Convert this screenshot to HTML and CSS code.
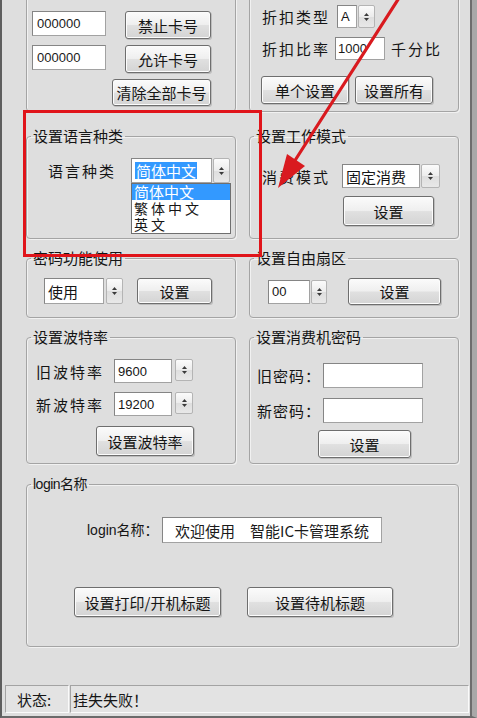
FILE: index.html
```html
<!DOCTYPE html>
<html lang="zh-CN">
<head>
    <meta charset="UTF-8">
    <meta name="viewport" content="width=device-width, initial-scale=1.0">
    <title>智能IC卡管理系统 - 设置</title>
    <link rel="stylesheet" href="styles.css">
</head>
<body>
    <div class="window">
        <div class="groups">
            <!-- card number group (top cut off) -->
            <fieldset class="group row1 card">
                <div class="body">
                    <div class="card-row">
                        <input class="txt card-no" value="000000">
                        <button class="btn btn-card">禁止卡号</button>
                    </div>
                    <div class="card-row">
                        <input class="txt card-no" value="000000">
                        <button class="btn btn-card">允许卡号</button>
                    </div>
                    <div class="card-row end">
                        <button class="btn btn-clear">清除全部卡号</button>
                    </div>
                </div>
            </fieldset>

            <fieldset class="group row1 discount">
                <div class="body">
                    <div class="line">
                        <span class="lbl w75">折扣类型</span>
                        <div class="sel">
                            <span class="sel-box w20 num">A</span>
                            <span class="spin w17">
                                <svg width="5" height="8" viewBox="0 0 5 8"><polygon points="0,3 2.5,0 5,3"/><polygon points="0,5 2.5,8 5,5"/></svg>
                            </span>
                        </div>
                    </div>
                    <div class="line mt9">
                        <span class="lbl w73">折扣比率</span>
                        <input class="txt rate" value="1000">
                        <span class="lbl unit">千分比</span>
                    </div>
                    <div class="line mt16 buttons">
                        <button class="btn btn-one">单个设置</button>
                        <button class="btn btn-all">设置所有</button>
                    </div>
                </div>
            </fieldset>

            <fieldset class="group row2 lang">
                <legend>设置语言种类</legend>
                <div class="body">
                    <div class="line">
                        <span class="lbl w83">语言种类</span>
                        <div class="sel">
                            <span class="sel-box w81 h25"><span class="hl">简体中文</span></span>
                            <span class="spin w17 h25">
                                <svg width="5" height="8" viewBox="0 0 5 8"><polygon points="0,3 2.5,0 5,3"/><polygon points="0,5 2.5,8 5,5"/></svg>
                            </span>
                            <ul class="drop">
                                <li class="on">简体中文</li>
                                <li>繁体中文</li>
                                <li>英文</li>
                            </ul>
                        </div>
                    </div>
                </div>
            </fieldset>

            <fieldset class="group row2 mode">
                <legend>设置工作模式</legend>
                <div class="body">
                    <div class="line">
                        <span class="lbl w80">消费模式</span>
                        <div class="sel">
                            <span class="sel-box w78">固定消费</span>
                            <span class="spin w19">
                                <svg width="5" height="8" viewBox="0 0 5 8"><polygon points="0,3 2.5,0 5,3"/><polygon points="0,5 2.5,8 5,5"/></svg>
                            </span>
                        </div>
                    </div>
                    <button class="btn btn-mode">设置</button>
                </div>
            </fieldset>

            <fieldset class="group row3 pwduse">
                <legend>密码功能使用</legend>
                <div class="body line">
                    <div class="sel gap2">
                        <span class="sel-box w60 h26">使用</span>
                        <span class="spin w17 h26">
                            <svg width="5" height="8" viewBox="0 0 5 8"><polygon points="0,3 2.5,0 5,3"/><polygon points="0,5 2.5,8 5,5"/></svg>
                        </span>
                    </div>
                    <button class="btn btn-pwduse">设置</button>
                </div>
            </fieldset>

            <fieldset class="group row3 sector">
                <legend>设置自由扇区</legend>
                <div class="body line">
                    <div class="sel">
                        <span class="sel-box w42 num">00</span>
                        <span class="spin w16">
                            <svg width="5" height="8" viewBox="0 0 5 8"><polygon points="0,3 2.5,0 5,3"/><polygon points="0,5 2.5,8 5,5"/></svg>
                        </span>
                    </div>
                    <button class="btn btn-sector">设置</button>
                </div>
            </fieldset>

            <fieldset class="group row4 baud">
                <legend>设置波特率</legend>
                <div class="body">
                    <div class="line">
                        <span class="lbl w78">旧波特率</span>
                        <div class="sel gap3">
                            <span class="sel-box w58 num">9600</span>
                            <span class="spin w18 h22">
                                <svg width="5" height="8" viewBox="0 0 5 8"><polygon points="0,3 2.5,0 5,3"/><polygon points="0,5 2.5,8 5,5"/></svg>
                            </span>
                        </div>
                    </div>
                    <div class="line mt9">
                        <span class="lbl w78">新波特率</span>
                        <div class="sel gap3">
                            <span class="sel-box w58 num">19200</span>
                            <span class="spin w18 h22">
                                <svg width="5" height="8" viewBox="0 0 5 8"><polygon points="0,3 2.5,0 5,3"/><polygon points="0,5 2.5,8 5,5"/></svg>
                            </span>
                        </div>
                    </div>
                    <button class="btn btn-baud">设置波特率</button>
                </div>
            </fieldset>

            <fieldset class="group row4 machpwd">
                <legend>设置消费机密码</legend>
                <div class="body">
                    <div class="line">
                        <span class="lbl w66 tight">旧密码：</span>
                        <input class="txt pwd" value="">
                    </div>
                    <div class="line mt10">
                        <span class="lbl w66 tight">新密码：</span>
                        <input class="txt pwd" value="">
                    </div>
                    <button class="btn btn-machpwd">设置</button>
                </div>
            </fieldset>

            <fieldset class="group login">
                <legend>login名称</legend>
                <div class="body">
                    <div class="line login-line">
                        <span class="lbl w75 login-lbl">login名称：</span>
                        <input class="txt title" value="欢迎使用　智能IC卡管理系统">
                    </div>
                    <div class="line login-buttons">
                        <button class="btn btn-boot">设置打印/开机标题</button>
                        <button class="btn btn-idle">设置待机标题</button>
                    </div>
                </div>
            </fieldset>
        </div>

        <div class="status">
            <span class="pane pane-label">状态:</span>
            <span class="pane pane-msg">挂失失败！</span>
        </div>

        <!-- annotation drawn over the screenshot -->
        <svg class="annot" width="477" height="718" viewBox="0 0 477 718">
            <rect x="24.5" y="111.5" width="236" height="144" fill="none" stroke="#e0141a" stroke-width="3"/>
            <line x1="399" y1="-2" x2="294" y2="162" stroke="#d91a1f" stroke-width="3.2" stroke-linecap="round"/>
            <polygon points="278,188 287,154 305,166" fill="#d91a1f"/>
        </svg>
    </div>
</body>
</html>
```

FILE: styles.css
```css
*{
   margin: 0;
   padding: 0;
   box-sizing: border-box;
   outline: none;
}

body{
   width: 477px;
   height: 718px;
   overflow: hidden;
   background-color: #dedede;
   font-family: "Noto Sans CJK SC", "Liberation Sans", sans-serif;
   font-size: 15px;
   line-height: 17px;
   color: #151515;
}

.window{
   position: relative;
   width: 477px;
   height: 718px;
   display: flex;
   flex-direction: column;
   overflow: hidden;
   border-left: 2px solid #5e5e5e;
   border-right: 5px solid #a8a8a8;
   border-bottom: 2px solid #6a6a6a;
   box-shadow: inset -2px 0 #6d6d6d;
}

.groups{
   display: grid;
   grid-template-columns: 210px 210px;
   column-gap: 13px;
   align-items: start;
   margin: -30px 0 0 24px;
}

.group{
   border: 1px solid #a4a4a4;
   border-radius: 4px;
   min-width: 0;
   box-shadow: 1px 1px 0 #f1f1f1, inset 1px 1px 0 #f1f1f1;
}

.group legend{
   margin-left: 4px;
   padding: 0 2px;
   line-height: 16px;
}

.row1{ height: 142px; }
.row2{ height: 111px; margin-top: 16px; }
.row3{ height: 68px; margin-top: 11px; }
.row4{ height: 135px; margin-top: 11px; }

.line{
   display: flex;
   align-items: center;
}

.mt9{ margin-top: 9px; }
.mt10{ margin-top: 10px; }
.mt16{ margin-top: 16px; }

.lbl{
   display: inline-block;
   flex: none;
   letter-spacing: 2px;
   white-space: nowrap;
}

.lbl.tight{ letter-spacing: 1px; }

.w66{ width: 66px; }
.w73{ width: 73px; }
.w75{ width: 75px; }
.w78{ width: 78px; }
.w80{ width: 80px; }
.w83{ width: 83px; }

/* text boxes */
.txt{
   height: 24px;
   background: #fff;
   border: 1px solid #a2a2a2;
   border-top-color: #858585;
   border-left-color: #858585;
   font-family: "Liberation Sans", sans-serif;
   font-size: 13px;
   color: #1a1a1a;
   padding: 0 4px;
}

/* select + spinner */
.sel{
   position: relative;
   display: flex;
   gap: 1px;
   flex: none;
}

.sel.gap2{ gap: 2px; }
.sel.gap3{ gap: 3px; }

.sel-box{
   display: flex;
   align-items: center;
   height: 24px;
   padding-left: 3px;
   background: #fff;
   border: 1px solid #a2a2a2;
   border-top-color: #858585;
   border-left-color: #858585;
   white-space: nowrap;
}

.sel-box.num{
   font-family: "Liberation Sans", sans-serif;
   font-size: 13px;
}

.spin{
   display: flex;
   align-items: center;
   justify-content: center;
   height: 24px;
   border: 1px solid #b4b4b4;
   border-radius: 2px;
   background: linear-gradient(#fbfbfb, #ececec 50%, #dedede 51%, #e8e8e8);
}

.spin svg{ fill: #3a3a3a; }

.w16{ width: 16px; }
.w17{ width: 17px; }
.w18{ width: 18px; }
.w19{ width: 19px; }
.w20{ width: 20px; }
.w42{ width: 42px; }
.w58{ width: 58px; }
.w60{ width: 60px; }
.w78{ width: 78px; }
.w81{ width: 81px; }
.h22{ height: 22px; }
.h25{ height: 25px; }
.h26{ height: 26px; }

.hl{
   background-color: #3399ff;
   color: #fff;
   padding: 0 1px;
   line-height: 17px;
}

.drop{
   position: absolute;
   top: 25px;
   left: 0;
   width: 100px;
   height: 51px;
   list-style: none;
   background: #fff;
   border: 1px solid #6f6f6f;
   z-index: 5;
}

.drop li{
   height: 16px;
   line-height: 16px;
   font-size: 14px;
   padding-left: 2px;
   letter-spacing: 3px;
}

.drop li.on{
   background-color: #3399ff;
   color: #fff;
   font-size: 15px;
   letter-spacing: 0;
}

/* buttons */
.btn{
   flex: none;
   height: 28px;
   font-family: "Noto Sans CJK SC", sans-serif;
   font-size: 15px;
   color: #151515;
   border: 1px solid #6e6e6e;
   border-radius: 3px;
   background: linear-gradient(#fbfbfb, #efefef 48%, #e0e0e0 52%, #d4d4d4);
   box-shadow: inset 0 0 0 1px #fcfcfc, 1px 1px 0 #bdbdbd;
   cursor: pointer;
}

.btn:hover{
   background: linear-gradient(#f4faff, #e2f1fb 48%, #cfe7fa 52%, #bcdcf5);
}

/* card group */
.card .body{
   padding: 40px 24px 0 5px;
}

.card-row{
   display: flex;
   justify-content: space-between;
   align-items: flex-start;
   height: 27px;
   margin-bottom: 7px;
}

.card-row.end{ justify-content: flex-end; }

.card-no{ width: 74px; height: 25px; }
.btn-card{ width: 86px; height: 28px; }
.btn-clear{ width: 99px; height: 27px; }

/* discount group */
.discount .body{
   padding: 34px 0 0 12px;
}

.rate{ width: 50px; height: 23px; padding: 0 2px; }
.unit{ margin-left: 6px; }
.discount .sel-box, .discount .spin{ height: 23px; }
.buttons{ gap: 6px; margin-left: -1px; }
.btn-one{ width: 88px; }
.btn-all{ width: 78px; }

/* language group */
.lang .body{
   padding: 14px 0 0 21px;
}

/* work mode group */
.mode .body{
   padding: 20px 0 0 12px;
}

.btn-mode{
   width: 91px;
   height: 30px;
   margin: 8px 0 0 81px;
}

/* password use group */
.pwduse .body{
   padding: 12px 0 0 17px;
}

.btn-pwduse{
   width: 75px;
   height: 26px;
   margin-left: 14px;
}

/* free sector group */
.sector .body{
   padding: 12px 0 0 18px;
}

.btn-sector{
   width: 93px;
   height: 27px;
   margin-left: 21px;
}

/* baud rate group */
.baud .body{
   padding: 14px 0 0 9px;
}

.btn-baud{
   width: 98px;
   height: 30px;
   margin: 10px 0 0 60px;
}

/* machine password group */
.machpwd .body{
   padding: 18px 0 0 7px;
}

.pwd{ width: 100px; height: 25px; }

.btn-machpwd{
   width: 93px;
   height: 28px;
   margin: 7px 0 0 61px;
}

/* login group */
.login{
   grid-column: 1 / -1;
   height: 171px;
   margin-top: 12px;
}

.login .body{
   padding: 25px 0 0 47px;
}

.login legend{
   font-family: "Liberation Sans", "Noto Sans CJK SC", sans-serif;
   font-size: 14px;
   letter-spacing: -0.5px;
}

.login-line{ margin-left: 13px; }

.login-lbl{
   font-family: "Liberation Sans", "Noto Sans CJK SC", sans-serif;
   font-size: 14px;
   letter-spacing: 0;
}

.title{
   width: 220px;
   height: 26px;
   font-family: "Noto Sans CJK SC", sans-serif;
   font-size: 15px;
   text-align: center;
}

.login-buttons{
   gap: 26px;
   margin-top: 44px;
}

.btn-boot{ width: 147px; height: 30px; }
.btn-idle{ width: 146px; height: 30px; }

/* status bar */
.status{
   display: flex;
   gap: 1px;
   height: 28px;
   margin: auto 3px 3px 3px;
}

.pane{
   display: flex;
   align-items: center;
   background-color: #e3e3e3;
   border: 1px solid #fafafa;
   border-top-color: #a3a3a3;
   border-left-color: #a3a3a3;
}

.pane-label{
   width: 64px;
   padding-left: 11px;
}

.pane-msg{
   flex: 1;
   padding-left: 2px;
}

.annot{
   position: absolute;
   top: 0;
   left: -2px;
   pointer-events: none;
}
```
